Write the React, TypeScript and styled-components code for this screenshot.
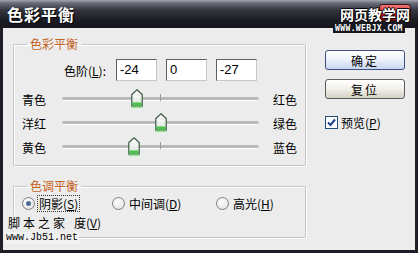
import styled, { createGlobalStyle } from "styled-components";

const GlobalStyle = createGlobalStyle`
  html, body {
    margin: 0;
    padding: 0;
    background: #ececec;
  }
  body {
    font-family: "Noto Sans CJK SC", "Liberation Sans", sans-serif;
    font-size: 12px;
    color: #000;
  }
`;

const Window = styled.div`
  position: relative;
  width: 418px;
  height: 253px;
  box-sizing: border-box;
  display: flex;
  flex-direction: column;
  background: #1e1f26;
  overflow: hidden;
`;

const TitleBar = styled.div`
  height: 28px;
  flex: none;
  display: flex;
  align-items: center;
  padding-left: 7px;
  background: linear-gradient(#a4a7b2 0, #6b6d79 3px, #34353f 10px, #1c1d24 20px, #15161b 100%);
  color: #fff;
  font-weight: bold;
  font-size: 16px;
  letter-spacing: 1px;
  text-shadow: 1px 1px 1px #000;
`;

const CloseButton = styled.div`
  position: absolute;
  left: 380px;
  top: 5px;
  width: 30px;
  height: 15px;
  border-radius: 3px;
  background: linear-gradient(#f07a7a, #d01818 60%, #a00a0a);
  box-shadow: 0 0 0 1px #3a1010;
`;

const SiteMark = styled.div`
  position: absolute;
  left: 340px;
  top: 6px;
  color: #fff;
  font-weight: bold;
  font-size: 14px;
  line-height: 17px;
  text-shadow: 1px 0 0 #000, -1px 0 0 #000, 0 1px 0 #000, 0 -1px 0 #000;
`;

const SiteUrl = styled.div`
  position: absolute;
  left: 333px;
  top: 24px;
  padding: 0 2px;
  background: #16171c;
  color: #fff;
  font-family: "DejaVu Sans Mono", monospace;
  font-weight: bold;
  font-size: 8px;
  line-height: 9px;
  letter-spacing: 0.4px;
`;

const Body = styled.div`
  flex: 1;
  margin: 0 3px 3px 3px;
  background: #ececec;
  display: flex;
  gap: 19px;
  padding: 8px 0 0 10px;
`;

const LeftColumn = styled.div`
  display: flex;
  flex-direction: column;
  gap: 12px;
`;

const Group = styled.fieldset<{ $height: number }>`
  position: relative;
  margin: 0;
  width: 293px;
  height: ${(p) => p.$height}px;
  box-sizing: border-box;
  padding: 0;
  border: 1px solid #c7c7c7;
  box-shadow: inset 1px 1px 0 #fff, 1px 1px 0 #fff;
  border-radius: 1px;
`;

const Legend = styled.legend`
  margin-left: 13px;
  padding: 0 3px;
  color: #c5621c;
  font-size: 12px;
  line-height: 16px;
`;

const LevelsRow = styled.div`
  display: flex;
  align-items: center;
  margin-top: 7px;
  gap: 9px;
`;

const LevelsLabel = styled.span`
  width: 92px;
  margin-right: 1px;
  text-align: right;
`;

const NumberBox = styled.div`
  width: 41px;
  height: 22px;
  box-sizing: border-box;
  border: 1px solid #5f5f5f;
  border-right-color: #c8c8c8;
  border-bottom-color: #c8c8c8;
  background: #fff;
  padding-left: 3px;
  font-family: "Liberation Sans", sans-serif;
  font-size: 13px;
  line-height: 20px;
`;

const SliderList = styled.div`
  display: flex;
  flex-direction: column;
  margin-top: 6px;
`;

const SliderRow = styled.div`
  display: flex;
  align-items: center;
  height: 24px;
  padding-left: 8px;
`;

const SideLabel = styled.span<{ $width: number }>`
  width: ${(p) => p.$width}px;
  flex: none;
`;

const Track = styled.div`
  position: relative;
  width: 197px;
  height: 3px;
  margin-right: 14px;
  border-radius: 2px;
  background: #b9b9b9;
  border-bottom: 1px solid #fff;
`;

const Tick = styled.div`
  position: absolute;
  left: 98px;
  top: -3px;
  width: 1px;
  height: 7px;
  background: #9a9a9a;
`;

const ThumbWrap = styled.div`
  position: absolute;
  top: -8px;
  width: 12px;
  height: 19px;
  margin-left: -6px;
`;

const RadioRow = styled.div`
  display: flex;
  align-items: center;
  height: 18px;
  padding-left: 8px;
`;

const RadioItem = styled.label<{ $width?: number }>`
  display: flex;
  align-items: center;
  gap: 3px;
  width: ${(p) => (p.$width ? `${p.$width}px` : "auto")};
`;

const RadioCircle = styled.span<{ $checked?: boolean }>`
  position: relative;
  width: 11px;
  height: 11px;
  border-radius: 50%;
  border: 1px solid #7a7f86;
  background: radial-gradient(circle at 40% 35%, #ffffff, #dcdcdc);
  &::after {
    content: "";
    display: ${(p) => (p.$checked ? "block" : "none")};
    position: absolute;
    left: 3px;
    top: 3px;
    width: 5px;
    height: 5px;
    border-radius: 50%;
    background: #4f6d93;
  }
`;

const RadioText = styled.span<{ $focused?: boolean }>`
  outline: ${(p) => (p.$focused ? "1px dotted #333" : "none")};
  padding: 0 1px;
  line-height: 15px;
`;

const Key = styled.span`
  text-decoration: underline;
`;

const KeepRow = styled.div`
  position: relative;
  display: flex;
  align-items: center;
  gap: 3px;
  height: 15px;
  margin-top: 3px;
  padding-left: 8px;
`;

const KeepMark = styled.div`
  position: absolute;
  left: -6px;
  top: 0;
  width: 66px;
  background: #ececec;
  font-size: 12px;
  line-height: 15px;
  letter-spacing: 3px;
`;

const Jb51Mark = styled.div`
  position: absolute;
  left: 5px;
  top: 232px;
  padding: 0 1px;
  background: #f2f2f2;
  font-family: "Liberation Mono", monospace;
  font-size: 10px;
  line-height: 12px;
`;

const RightColumn = styled.div`
  display: flex;
  flex-direction: column;
  padding-top: 14px;
`;

const Button = styled.div<{ $primary?: boolean }>`
  width: 80px;
  height: 20px;
  box-sizing: border-box;
  margin-bottom: 9px;
  display: flex;
  align-items: center;
  justify-content: center;
  border-radius: 3px;
  border: 1px solid ${(p) => (p.$primary ? "#3c4f7e" : "#5d5d5d")};
  background: ${(p) =>
    p.$primary
      ? "linear-gradient(#ffffff, #eef2fb 45%, #c9d6f1)"
      : "linear-gradient(#ffffff, #f4f2ec 45%, #d6d1c4)"};
  font-size: 12px;
  letter-spacing: 2px;
`;

const CheckRow = styled.label`
  display: flex;
  align-items: center;
  gap: 3px;
  margin-top: 6px;
`;

const CheckBox = styled.span`
  width: 11px;
  height: 11px;
  border: 1px solid #1d4f7a;
  background: #fff;
  display: flex;
  align-items: center;
  justify-content: center;
`;

const sliders = [
  { left: "青色", right: "红色", value: -24 },
  { left: "洋红", right: "绿色", value: 0 },
  { left: "黄色", right: "蓝色", value: -27 },
];

function Thumb() {
  return (
    <svg width="12" height="19" viewBox="0 0 12 19">
      <defs>
        <linearGradient id="tf" x1="0" y1="0" x2="0" y2="1">
          <stop offset="0" stopColor="#ffffff" />
          <stop offset="0.7" stopColor="#e6ece6" />
          <stop offset="1" stopColor="#c8d8c8" />
        </linearGradient>
      </defs>
      <path d="M6 0.8 L11.2 5.6 V17.2 H0.8 V5.6 Z" fill="url(#tf)" stroke="#3e5a44" strokeWidth="1.2" />
      <rect x="1.5" y="13.5" width="9" height="3" fill="#47c447" />
      <rect x="0.5" y="17.5" width="11" height="1.5" fill="#8ee68e" />
    </svg>
  );
}

export default function App() {
  return (
    <>
      <GlobalStyle />
      <Window>
        <TitleBar>色彩平衡</TitleBar>
        <CloseButton />
        <SiteMark>网页教学网</SiteMark>
        <SiteUrl>WWW.WEBJX.COM</SiteUrl>
        <Body>
          <LeftColumn>
            <Group $height={130}>
              <Legend>色彩平衡</Legend>
              <LevelsRow>
                <LevelsLabel>
                  色阶(<Key>L</Key>):
                </LevelsLabel>
                {sliders.map((s) => (
                  <NumberBox key={s.left}>{s.value}</NumberBox>
                ))}
              </LevelsRow>
              <SliderList>
                {sliders.map((s) => (
                  <SliderRow key={s.left}>
                    <SideLabel $width={40}>{s.left}</SideLabel>
                    <Track>
                      <Tick />
                      <ThumbWrap style={{ left: `${((s.value + 100) / 200) * 100}%` }}>
                        <Thumb />
                      </ThumbWrap>
                    </Track>
                    <SideLabel $width={28}>{s.right}</SideLabel>
                  </SliderRow>
                ))}
              </SliderList>
            </Group>
            <Group $height={60}>
              <Legend>色调平衡</Legend>
              <RadioRow>
                <RadioItem $width={90}>
                  <RadioCircle $checked />
                  <RadioText $focused>
                    阴影(<Key>S</Key>)
                  </RadioText>
                </RadioItem>
                <RadioItem $width={104}>
                  <RadioCircle />
                  <RadioText>
                    中间调(<Key>D</Key>)
                  </RadioText>
                </RadioItem>
                <RadioItem>
                  <RadioCircle />
                  <RadioText>
                    高光(<Key>H</Key>)
                  </RadioText>
                </RadioItem>
              </RadioRow>
              <KeepRow>
                <CheckBox />
                <span>
                  保持明度(<Key>V</Key>)
                </span>
                <KeepMark>脚本之家</KeepMark>
              </KeepRow>
            </Group>
          </LeftColumn>
          <RightColumn>
            <Button $primary>确定</Button>
            <Button>复位</Button>
            <CheckRow>
              <CheckBox>
                <svg width="9" height="9" viewBox="0 0 9 9">
                  <path d="M1 4.5 L3.5 7 L8 1.5" fill="none" stroke="#1b3f86" strokeWidth="2" />
                </svg>
              </CheckBox>
              <span>
                预览(<Key>P</Key>)
              </span>
            </CheckRow>
          </RightColumn>
        </Body>
        <Jb51Mark>www.Jb51.net</Jb51Mark>
      </Window>
    </>
  );
}
